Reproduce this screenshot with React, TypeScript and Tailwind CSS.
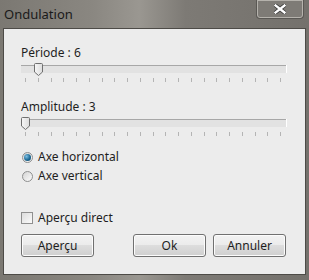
import React from 'react';

const font = { fontFamily: '"Noto Sans", "Segoe UI", sans-serif' };

// Tick marks under a slider (21 positions)
const Ticks = () => (
  <div className="ml-[21px] mr-[24px] flex h-[4px] justify-between">
    {[...Array(21)].map((_, i) => (
      <div key={i} className="h-full w-px bg-[#b4b4b4]" />
    ))}
  </div>
);

const Thumb = ({ left }: { left: number }) => (
  <svg
    className="absolute top-[-3px]"
    style={{ left }}
    width="9"
    height="13"
    viewBox="0 0 9 13"
  >
    <defs>
      <linearGradient id="thumbg" x1="0" x2="1" y1="0" y2="0">
        <stop offset="0" stopColor="#f7f7f7" />
        <stop offset="1" stopColor="#dcdcdc" />
      </linearGradient>
    </defs>
    <path
      d="M1.5 0.5 H7.5 Q8.5 0.5 8.5 1.5 V9 L4.5 12.5 L0.5 9 V1.5 Q0.5 0.5 1.5 0.5 Z"
      fill="url(#thumbg)"
      stroke="#6f6f6f"
    />
  </svg>
);

const Slider = ({ label, thumb }: { label: string; thumb: number }) => (
  <div className="flex flex-col">
    <div className="h-[16px] pl-[17px] text-[12px] leading-[16px] text-[#1e1e1e]">{label}</div>
    <div className="relative mx-[17px] mt-[4px] h-[8px] w-[265px] border-t border-[#a7a7a7] bg-[#e2e2e2]">
      <div className="absolute right-[-1px] top-[-1px] h-[8px] w-px bg-white" />
      <Thumb left={thumb} />
    </div>
    <div className="mt-[5px]">
      <Ticks />
    </div>
  </div>
);

const Radio = ({ checked, label }: { checked?: boolean; label: string }) => (
  <div className="flex h-[16px] items-center pl-[18px]">
    <div className="flex h-[11px] w-[11px] items-center justify-center rounded-full border border-[#8e8f8f] bg-gradient-to-br from-[#d4d4d4] to-[#fbfbfb]">
      {checked && (
        <div className="h-[7px] w-[7px] rounded-full bg-[radial-gradient(circle_at_35%_35%,#7ec0e3,#1d6a96_55%,#0e3c5a)]" />
      )}
    </div>
    <span className="ml-[5px] text-[12px] leading-[16px] text-[#1e1e1e]">{label}</span>
  </div>
);

const Button = ({ label }: { label: string }) => (
  <div className="flex h-[23px] w-[73px] items-center justify-center rounded-[3px] border border-[#707070] bg-[linear-gradient(#f2f2f2_0%,#ebebeb_50%,#dddddd_50%,#cfcfcf_100%)] text-[12px] text-[#1e1e1e] shadow-[inset_0_0_0_1px_#fcfcfc]">
    {label}
  </div>
);

export default function App() {
  return (
    <div
      className="flex h-[280px] w-[309px] flex-col bg-[linear-gradient(90deg,#7b7872_0%,#8a8781_30%,#9a9791_45%,#7d7a75_60%,#74716c_100%)]"
      style={font}
    >
      {/* Title bar */}
      <div className="flex h-[28px] items-start justify-between">
        <div className="pl-[4px] pt-[6px] text-[13px] leading-[16px] text-[#1a1a1a]">Ondulation</div>
        <div className="mr-[5px] flex h-[19px] w-[48px] items-center justify-center rounded-b-[4px] border border-t-0 border-[#5a5854] bg-[#7e7b76] shadow-[inset_0_0_0_1px_#b5b2ac]">
          <svg width="12" height="10" viewBox="0 0 12 10">
            <path d="M1.5 1.5 L10.5 8.5 M10.5 1.5 L1.5 8.5" stroke="#3a3a3a" strokeWidth="4" strokeLinecap="square" />
            <path d="M1.5 1.5 L10.5 8.5 M10.5 1.5 L1.5 8.5" stroke="#ffffff" strokeWidth="2.4" strokeLinecap="square" />
          </svg>
        </div>
      </div>

      {/* Client area */}
      <div className="mx-[3px] flex h-[247px] flex-col border border-[#4d4b47] bg-[#ececec] pt-[16px]">
        <Slider label="Période : 6" thumb={13} />
        <div className="mt-[17px]">
          <Slider label="Amplitude : 3" thumb={0} />
        </div>

        <div className="mt-[13px] flex flex-col gap-[3px]">
          <Radio checked label="Axe horizontal" />
          <Radio label="Axe vertical" />
        </div>

        <div className="mt-[26px] flex h-[16px] items-center pl-[17px]">
          <div className="h-[12px] w-[12px] border border-[#8f8f8f] bg-gradient-to-br from-[#dcdcdc] to-[#fbfbfb]" />
          <span className="ml-[5px] text-[12px] leading-[16px] text-[#1e1e1e]">Aperçu direct</span>
        </div>

        <div className="mt-[8px] flex pl-[17px]">
          <Button label="Aperçu" />
          <div className="ml-[39px]">
            <Button label="Ok" />
          </div>
          <div className="ml-[7px]">
            <Button label="Annuler" />
          </div>
        </div>
      </div>
    </div>
  );
}
